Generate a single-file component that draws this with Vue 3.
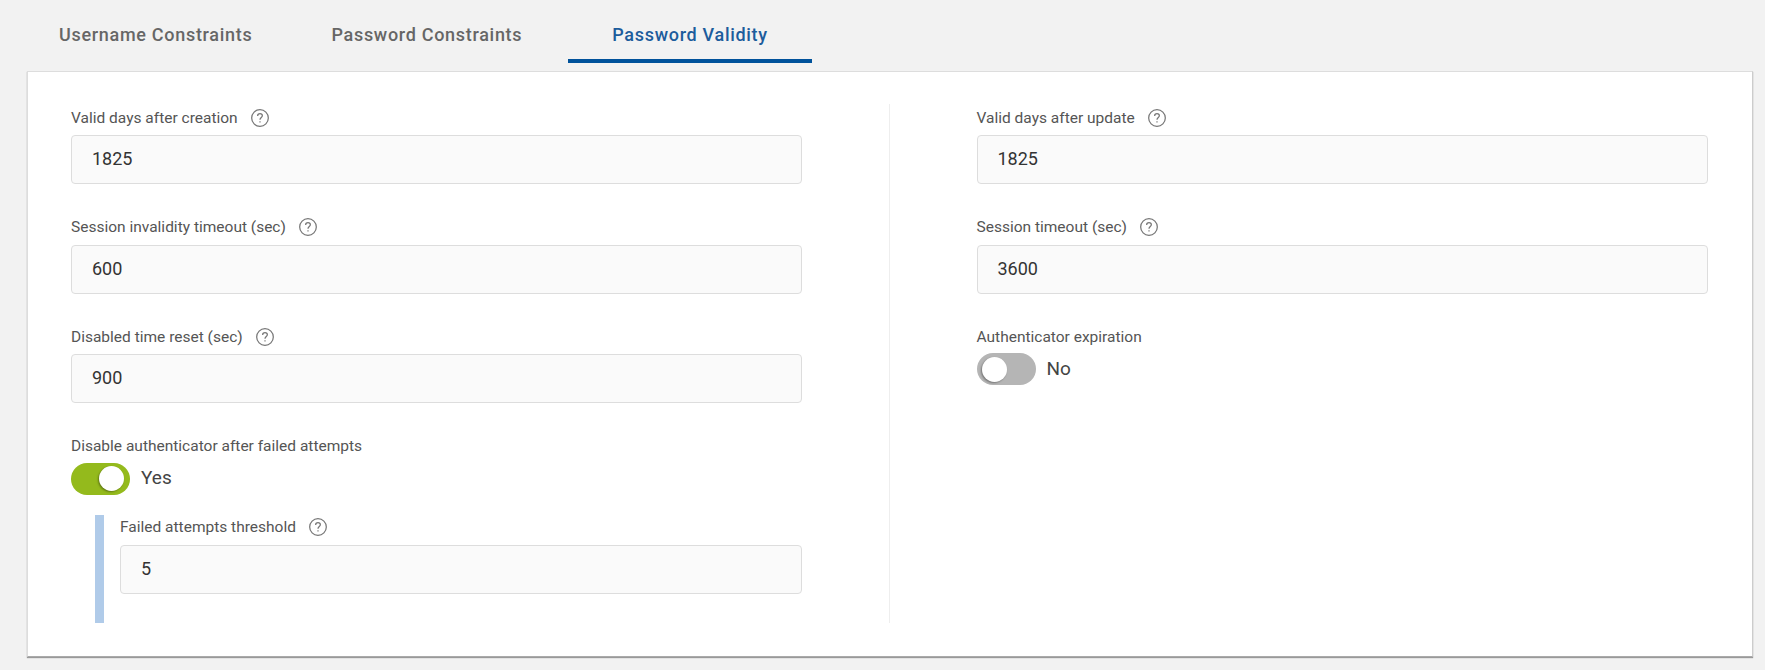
<script setup>
const leftFields = [
  { label: 'Valid days after creation', value: '1825' },
  { label: 'Session invalidity timeout (sec)', value: '600' },
  { label: 'Disabled time reset (sec)', value: '900' },
]
const rightFields = [
  { label: 'Valid days after update', value: '1825' },
  { label: 'Session timeout (sec)', value: '3600' },
]
const tabs = [
  { name: 'Username Constraints' },
  { name: 'Password Constraints' },
  { name: 'Password Validity', active: true },
]
</script>

<template>
  <div class="page">
    <div class="tabs">
      <div v-for="tab in tabs" :key="tab.name" class="tab" :class="{ active: tab.active }">{{ tab.name }}</div>
    </div>
    <div class="card">
      <div class="col col_left">
        <div v-for="f in leftFields" :key="f.label" class="field">
          <div class="label">
            {{ f.label }}
            <svg class="help" viewBox="0 0 16 16"><circle cx="8" cy="8" r="7.4" /><path d="M5.9 6.2c0-1.2 1-2 2.1-2s2.1.8 2.1 1.9c0 1.5-2.1 1.6-2.1 3.5M8 10.8v1.2" /></svg>
          </div>
          <div class="input">{{ f.value }}</div>
        </div>
        <div class="switch_field">
          <div class="label">Disable authenticator after failed attempts</div>
          <div class="switch_row">
            <span class="switch on"><span class="knob"></span></span>
            <span class="switch_text">Yes</span>
          </div>
        </div>
        <div class="nested">
          <div class="label">
            Failed attempts threshold
            <svg class="help" viewBox="0 0 16 16"><circle cx="8" cy="8" r="7.4" /><path d="M5.9 6.2c0-1.2 1-2 2.1-2s2.1.8 2.1 1.9c0 1.5-2.1 1.6-2.1 3.5M8 10.8v1.2" /></svg>
          </div>
          <div class="input">5</div>
        </div>
      </div>
      <div class="col col_right">
        <div v-for="f in rightFields" :key="f.label" class="field">
          <div class="label">
            {{ f.label }}
            <svg class="help" viewBox="0 0 16 16"><circle cx="8" cy="8" r="7.4" /><path d="M5.9 6.2c0-1.2 1-2 2.1-2s2.1.8 2.1 1.9c0 1.5-2.1 1.6-2.1 3.5M8 10.8v1.2" /></svg>
          </div>
          <div class="input">{{ f.value }}</div>
        </div>
        <div class="switch_field">
          <div class="label">Authenticator expiration</div>
          <div class="switch_row">
            <span class="switch"><span class="knob"></span></span>
            <span class="switch_text">No</span>
          </div>
        </div>
      </div>
    </div>
  </div>
</template>

<style>
html,
body {
  background: #f2f2f2;
}
</style>

<style scoped>
.page {
  height: 670px;
  overflow: hidden;
  padding: 0 12px 0 27px;
  background: #f2f2f2;
  font-family: Roboto, sans-serif;
  box-sizing: border-box;
}

.tabs {
  display: flex;
  height: 63px;
  padding-left: 32px;
}

.tab {
  font-size: 18px;
  font-weight: 500;
  letter-spacing: 0.7px;
  line-height: 20px;
  padding-top: 25px;
  color: #666;
  margin-right: 79px;
  box-sizing: border-box;
}

.tab.active {
  color: #1c5c9c;
  margin-left: -33px;
  padding: 25px 44px 0;
  border-bottom: 4px solid #00529b;
  margin-right: 0;
}

.card {
  display: grid;
  grid-template-columns: 1fr 1fr;
  margin-top: 8px;
  height: 586px;
  padding: 32px 44px 0 43px;
  background: #fff;
  border: 1px solid #ddd;
  border-right-color: #ccc;
  border-bottom: 1px solid #aaa;
  box-shadow: 0 1px 1px #999;
  box-sizing: border-box;
}

.col {
  height: 519px;
  box-sizing: border-box;
}

.col_left {
  padding-right: 88px;
}

.col_right {
  margin-left: -1px;
  padding-left: 87px;
  border-left: 1px solid #eee;
}

.field {
  margin-bottom: 29.5px;
}

.label {
  display: flex;
  align-items: center;
  height: 31px;
  padding-bottom: 4px;
  box-sizing: border-box;
  font-size: 15.5px;
  color: #555;
}

.help {
  width: 18px;
  height: 18px;
  margin-left: 13px;
  fill: none;
  stroke: #777;
  stroke-width: 1.1;
}

.input {
  height: 49px;
  line-height: 46px;
  padding-left: 20px;
  background: #fafafa;
  border: 1px solid #ddd;
  border-radius: 4px;
  font-size: 18px;
  color: #333;
  box-sizing: border-box;
}

.switch_field .label {
  height: 30px;
  padding-bottom: 3px;
}

.switch_row {
  display: flex;
  align-items: center;
}

.switch {
  display: flex;
  align-items: center;
  width: 59px;
  height: 32px;
  padding: 0 5px;
  border-radius: 16px;
  background: #b5b5b5;
  box-sizing: border-box;
}

.switch.on {
  justify-content: flex-end;
  background: #94ba1c;
  padding: 0 6px;
}

.knob {
  width: 25px;
  height: 25px;
  border-radius: 50%;
  background: #fff;
  box-shadow: -1px 1px 2px rgba(0, 0, 0, 0.35);
}

.switch_text {
  margin-left: 11px;
  padding-bottom: 2px;
  font-size: 19px;
  color: #444;
}

.nested {
  margin: 20px 0 0 24px;
  height: 108px;
  padding-left: 16px;
  border-left: 9px solid #b0cbe9;
  box-sizing: border-box;
}

.nested .label {
  height: 30px;
  padding-bottom: 5px;
}
</style>
